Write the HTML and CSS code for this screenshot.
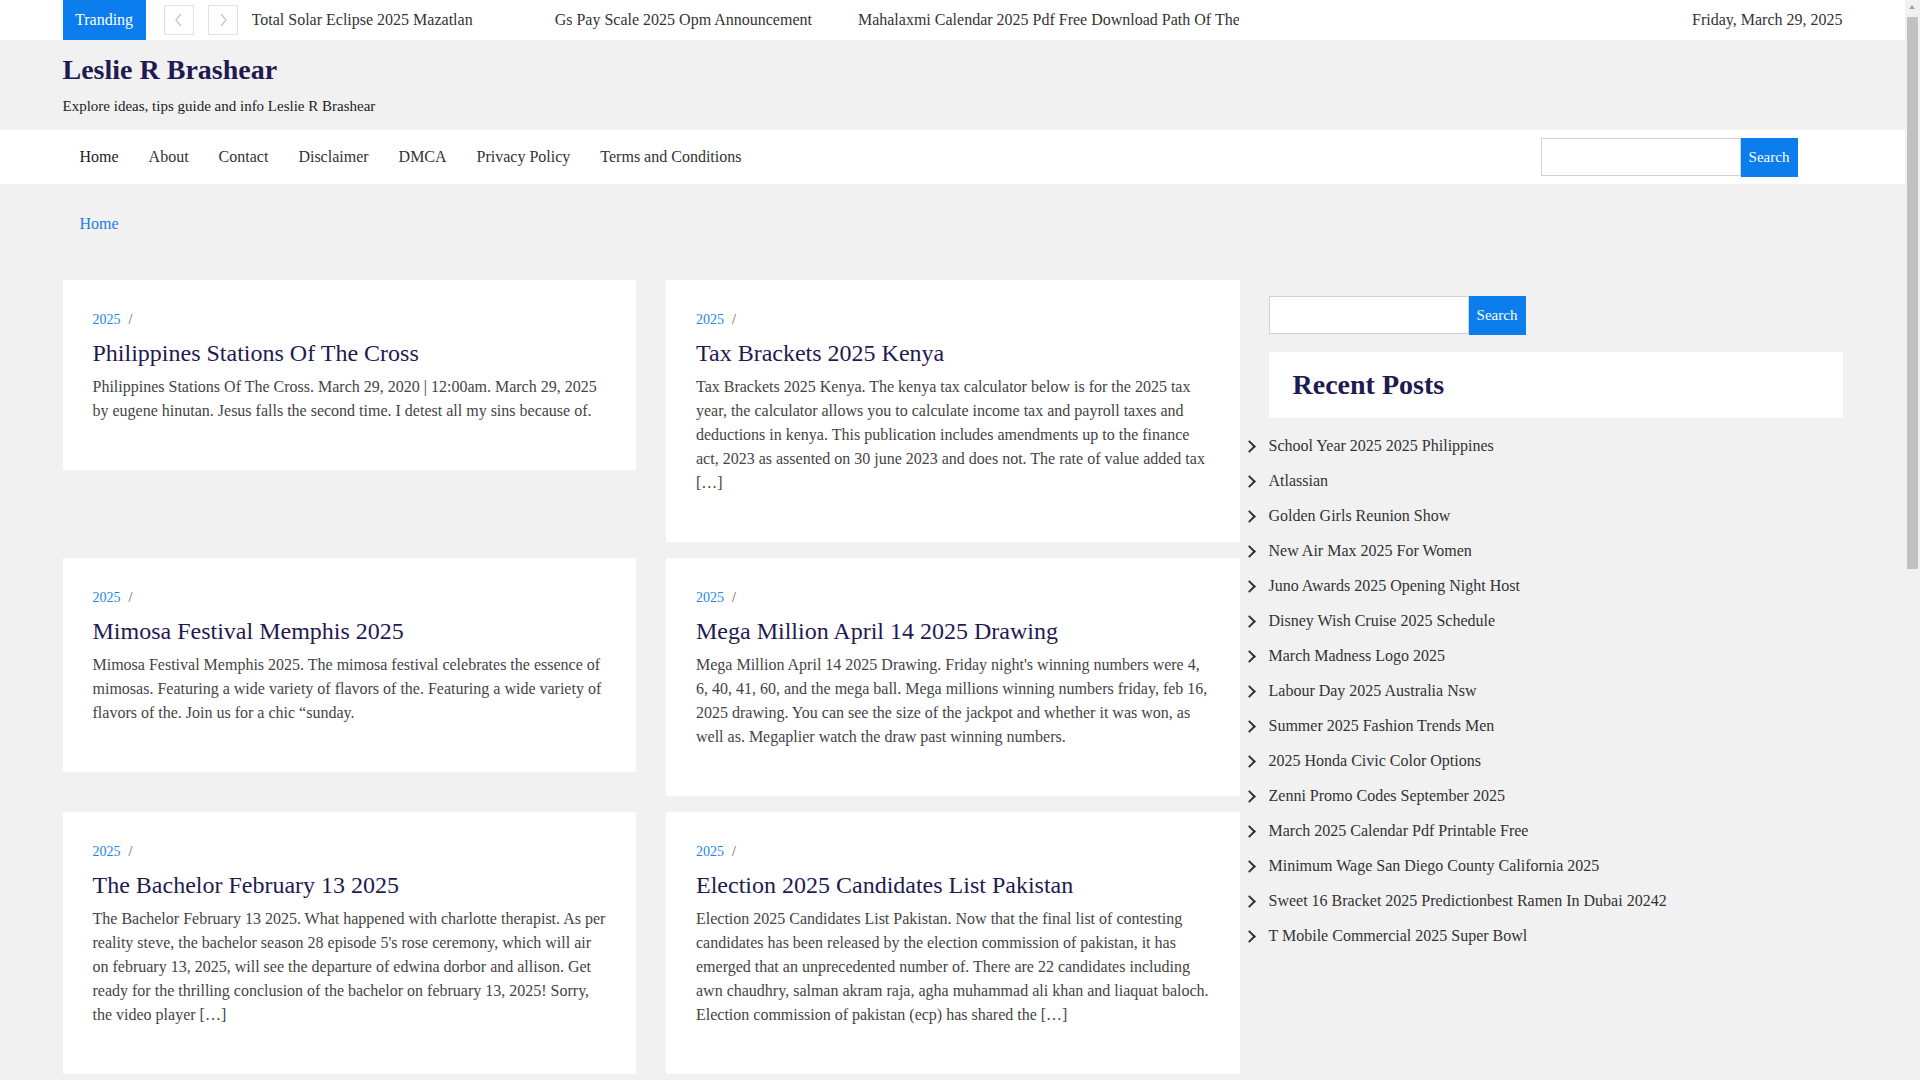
FILE: index.html
```html
<!DOCTYPE html>
<html lang="en">
<head>
<meta charset="utf-8">
<title>Leslie R Brashear</title>
<link rel="stylesheet" href="styles.css">
</head>
<body>
<div class="scrollbar" aria-hidden="true">
  <span class="scroll-arrow"></span>
  <span class="scroll-thumb"></span>
</div>
<div class="page">
<div class="topbar">
  <div class="container topbar-inner">
    <span class="trend-label">Tranding</span>
    <div class="trend-nav">
      <button class="trend-btn" aria-label="Previous"><svg width="10" height="14" viewBox="0 0 10 14"><polyline points="7,1 2,7 7,13" fill="none" stroke="#c9c9cf" stroke-width="1.4"/></svg></button>
      <button class="trend-btn" aria-label="Next"><svg width="10" height="14" viewBox="0 0 10 14"><polyline points="3,1 8,7 3,13" fill="none" stroke="#c9c9cf" stroke-width="1.4"/></svg></button>
    </div>
    <div class="ticker">
      <a class="tick t1" href="#">Total Solar Eclipse 2025 Mazatlan</a>
      <a class="tick t2" href="#">Gs Pay Scale 2025 Opm Announcement</a>
      <a class="tick" href="#">Mahalaxmi Calendar 2025 Pdf Free Download Path Of The Sun</a>
    </div>
    <span class="date">Friday, March 29, 2025</span>
  </div>
</div>

<header class="site-header">
  <div class="container">
    <h1 class="site-title">Leslie R Brashear</h1>
    <p class="tagline">Explore ideas, tips guide and info Leslie R Brashear</p>
  </div>
</header>

<nav class="navbar">
  <div class="container navbar-inner">
    <ul class="menu">
      <li><a class="active" href="#">Home</a></li>
      <li><a href="#">About</a></li>
      <li><a href="#">Contact</a></li>
      <li><a href="#">Disclaimer</a></li>
      <li><a href="#">DMCA</a></li>
      <li><a href="#">Privacy Policy</a></li>
      <li><a href="#">Terms and Conditions</a></li>
    </ul>
    <form class="search nav-search">
      <input type="text" class="search-input" aria-label="Search">
      <button type="button" class="search-btn">Search</button>
    </form>
  </div>
</nav>

<div class="container breadcrumb"><a href="#">Home</a></div>

<div class="container layout">
  <main class="posts">
    <article class="card">
      <div class="meta"><a href="#">2025</a><span class="sep">/</span></div>
      <h2 class="card-title">Philippines Stations Of The Cross</h2>
      <p class="excerpt">Philippines Stations Of The Cross. March 29, 2020 | 12:00am. March 29, 2025 by eugene hinutan. Jesus falls the second time. I detest all my sins because of.</p>
    </article>
    <article class="card">
      <div class="meta"><a href="#">2025</a><span class="sep">/</span></div>
      <h2 class="card-title">Tax Brackets 2025 Kenya</h2>
      <p class="excerpt">Tax Brackets 2025 Kenya. The kenya tax calculator below is for the 2025 tax year, the calculator allows you to calculate income tax and payroll taxes and deductions in kenya. This publication includes amendments up to the finance act, 2023 as assented on 30 june 2023 and does not. The rate of value added tax […]</p>
    </article>
    <article class="card">
      <div class="meta"><a href="#">2025</a><span class="sep">/</span></div>
      <h2 class="card-title">Mimosa Festival Memphis 2025</h2>
      <p class="excerpt">Mimosa Festival Memphis 2025. The mimosa festival celebrates the essence of mimosas. Featuring a wide variety of flavors of the. Featuring a wide variety of flavors of the. Join us for a chic “sunday.</p>
    </article>
    <article class="card">
      <div class="meta"><a href="#">2025</a><span class="sep">/</span></div>
      <h2 class="card-title">Mega Million April 14 2025 Drawing</h2>
      <p class="excerpt">Mega Million April 14 2025 Drawing. Friday night's winning numbers were 4, 6, 40, 41, 60, and the mega ball. Mega millions winning numbers friday, feb 16, 2025 drawing. You can see the size of the jackpot and whether it was won, as well as. Megaplier watch the draw past winning numbers.</p>
    </article>
    <article class="card">
      <div class="meta"><a href="#">2025</a><span class="sep">/</span></div>
      <h2 class="card-title">The Bachelor February 13 2025</h2>
      <p class="excerpt">The Bachelor February 13 2025. What happened with charlotte therapist. As per reality steve, the bachelor season 28 episode 5's rose ceremony, which will air on february 13, 2025, will see the departure of edwina dorbor and allison. Get ready for the thrilling conclusion of the bachelor on february 13, 2025! Sorry, the video player […]</p>
    </article>
    <article class="card">
      <div class="meta"><a href="#">2025</a><span class="sep">/</span></div>
      <h2 class="card-title">Election 2025 Candidates List Pakistan</h2>
      <p class="excerpt">Election 2025 Candidates List Pakistan. Now that the final list of contesting candidates has been released by the election commission of pakistan, it has emerged that an unprecedented number of. There are 22 candidates including awn chaudhry, salman akram raja, agha muhammad ali khan and liaquat baloch. Election commission of pakistan (ecp) has shared the […]</p>
    </article>
    <article class="card">
      <div class="meta"><a href="#">2025</a><span class="sep">/</span></div>
      <h2 class="card-title">Juno Awards 2025 Opening Night Host</h2>
      <p class="excerpt">Juno Awards 2025 Opening Night Host. The juno awards return with a celebration of canadian music, featuring performances and presentations across the weekend. Here is everything you need to know about the opening night and its host.</p>
    </article>
    <article class="card">
      <div class="meta"><a href="#">2025</a><span class="sep">/</span></div>
      <h2 class="card-title">Disney Wish Cruise 2025 Schedule</h2>
      <p class="excerpt">Disney Wish Cruise 2025 Schedule. Explore the itineraries, departure ports and sailing dates for the disney wish in 2025. Plan your family vacation with the latest schedule and tips for booking the best staterooms […]</p>
    </article>
    <article class="card">
      <div class="meta"><a href="#">2025</a><span class="sep">/</span></div>
      <h2 class="card-title">March Madness Logo 2025</h2>
      <p class="excerpt">March Madness Logo 2025. The official logo for the 2025 tournament has been revealed, with a fresh look for the final four in san antonio. See the design and history of the march madness branding.</p>
    </article>
    <article class="card">
      <div class="meta"><a href="#">2025</a><span class="sep">/</span></div>
      <h2 class="card-title">Labour Day 2025 Australia Nsw</h2>
      <p class="excerpt">Labour Day 2025 Australia Nsw. Labour day in new south wales falls on the first monday in october. Find out the public holiday dates, what is open and closed, and how the day is celebrated across the state.</p>
    </article>
  </main>

  <aside class="sidebar">
    <form class="search side-search">
      <input type="text" class="search-input" aria-label="Search">
      <button type="button" class="search-btn">Search</button>
    </form>
    <div class="widget-head"><h2>Recent Posts</h2></div>
    <ul class="recent">
      <li><a href="#">School Year 2025 2025 Philippines</a></li>
      <li><a href="#">Atlassian</a></li>
      <li><a href="#">Golden Girls Reunion Show</a></li>
      <li><a href="#">New Air Max 2025 For Women</a></li>
      <li><a href="#">Juno Awards 2025 Opening Night Host</a></li>
      <li><a href="#">Disney Wish Cruise 2025 Schedule</a></li>
      <li><a href="#">March Madness Logo 2025</a></li>
      <li><a href="#">Labour Day 2025 Australia Nsw</a></li>
      <li><a href="#">Summer 2025 Fashion Trends Men</a></li>
      <li><a href="#">2025 Honda Civic Color Options</a></li>
      <li><a href="#">Zenni Promo Codes September 2025</a></li>
      <li><a href="#">March 2025 Calendar Pdf Printable Free</a></li>
      <li><a href="#">Minimum Wage San Diego County California 2025</a></li>
      <li><a href="#">Sweet 16 Bracket 2025 Predictionbest Ramen In Dubai 20242</a></li>
      <li><a href="#">T Mobile Commercial 2025 Super Bowl</a></li>
    </ul>
  </aside>
</div>

<footer class="footer">
  <div class="container">Copyright © 2025 Leslie R Brashear. All rights reserved.</div>
</footer>
</div>
</body>
</html>
```
FILE: styles.css
```css
* { box-sizing: border-box; }

html, body {
  margin: 0;
  padding: 0;
}

body {
  background: #f1f1f1;
  font-family: "Liberation Serif", "Times New Roman", serif;
  font-size: 16px;
  color: #333;
}

a { text-decoration: none; color: inherit; }

/* page area leaves room for the (drawn) scrollbar on the right */
.page {
  margin-right: 15px;
}

.scrollbar {
  position: fixed;
  top: 0;
  right: 0;
  width: 15px;
  height: 100vh;
  background: #f1f1f1;
  z-index: 10;
}
.scroll-arrow {
  position: absolute;
  top: 5px;
  left: 4px;
  width: 0;
  height: 0;
  border-left: 3.5px solid transparent;
  border-right: 3.5px solid transparent;
  border-bottom: 4px solid #a3a3a3;
}
.scroll-thumb {
  position: absolute;
  top: 17px;
  left: 2px;
  width: 11px;
  height: 552px;
  background: #c1c1c1;
}

.container {
  width: 1780px;
  margin: 0 auto;
}

/* top bar */
.topbar {
  background: #fff;
  height: 40px;
}
.topbar-inner {
  display: flex;
  align-items: center;
  height: 40px;
}
.trend-label {
  background: #0b7ded;
  color: #fff;
  height: 40px;
  line-height: 40px;
  padding: 0 12.5px;
  flex: none;
}
.trend-nav {
  display: flex;
  gap: 14px;
  margin-left: 18px;
  flex: none;
}
.trend-btn {
  width: 30px;
  height: 30px;
  border: 1px solid #e0e0e6;
  background: #fff;
  padding: 0;
  display: flex;
  align-items: center;
  justify-content: center;
}
.ticker {
  margin-left: 14px;
  width: 987px;
  overflow: hidden;
  white-space: nowrap;
  display: flex;
  flex: none;
  color: #333;
}
.tick { flex: none; }
.t1 { margin-right: 82px; }
.t2 { margin-right: 46px; }
.date {
  margin-left: auto;
  color: #333;
}

/* header */
.site-header {
  background: #f1f1f1;
  padding: 13px 0 13px;
}
.site-title {
  margin: 0;
  font-size: 28px;
  line-height: 34px;
  font-weight: bold;
  color: #1f1a52;
}
.tagline {
  margin: 8px 0 0;
  font-size: 15px;
  line-height: 22px;
  color: #222;
}

/* navbar */
.navbar {
  background: #fff;
  height: 54px;
}
.navbar-inner {
  display: flex;
  align-items: center;
  height: 54px;
}
.menu {
  list-style: none;
  margin: 0 0 0 2px;
  padding: 0;
  display: flex;
}
.menu a {
  display: block;
  padding: 0 15px;
  line-height: 54px;
  color: #333;
}
.menu a.active { color: #222; }

.search {
  display: flex;
  align-items: stretch;
}
.nav-search {
  margin-left: auto;
  margin-right: 45px;
}
.search-input {
  width: 200px;
  height: 38px;
  border: 1px solid #cfd2da;
  background: #fff;
  margin: 0;
  padding: 0 8px;
  outline: none;
}
.search-btn {
  width: 57px;
  height: 39px;
  border: 0;
  margin: 0;
  background: #0b7ded;
  color: #fff;
  font-family: "Liberation Serif", "Times New Roman", serif;
  font-size: 15px;
  padding: 0;
}

/* breadcrumb */
.breadcrumb {
  padding: 28px 0 44px 17px;
  line-height: 24px;
}
.breadcrumb a { color: #1a7fe6; }

/* layout */
.layout {
  display: grid;
  grid-template-columns: 1177px 574px;
  column-gap: 29px;
  align-items: start;
}
.posts {
  display: grid;
  grid-template-columns: 1fr 1fr;
  column-gap: 30px;
  row-gap: 16px;
  align-items: start;
}
.card {
  background: #fff;
  padding: 30px 30px 47px;
}
.meta {
  font-size: 14px;
  line-height: 20px;
  color: #555;
}
.meta a { color: #1a86f0; }
.sep { margin-left: 8px; }
.card-title {
  margin: 8px 0 7px;
  font-size: 24px;
  line-height: 30px;
  font-weight: normal;
  color: #1f1a52;
}
.excerpt {
  margin: 0;
  font-size: 16px;
  line-height: 24px;
  color: #444;
}

/* sidebar */
.side-search {
  margin-top: 16px;
}
.widget-head {
  background: #fff;
  margin-top: 17px;
  padding: 16px 24px;
}
.widget-head h2 {
  margin: 0;
  font-size: 28px;
  line-height: 34px;
  font-weight: bold;
  color: #1f1a52;
}
.recent {
  list-style: none;
  margin: 10px 0 0;
  padding: 0;
}
.recent li {
  position: relative;
  padding: 5.5px 0;
  line-height: 24px;
  color: #333;
}
.recent li::before {
  content: "";
  position: absolute;
  left: -24px;
  top: 14px;
  width: 7px;
  height: 7px;
  border-top: 2px solid #333;
  border-right: 2px solid #333;
  transform: rotate(45deg);
}

.footer {
  margin-top: 60px;
  background: #fff;
  padding: 30px 0;
  color: #444;
  text-align: center;
}
```
